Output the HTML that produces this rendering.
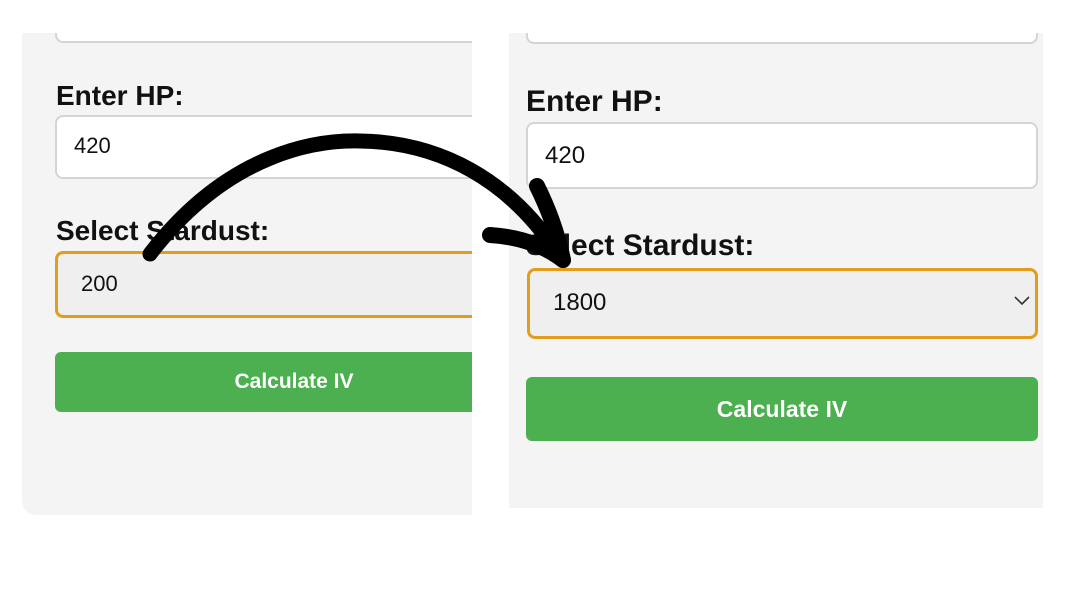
<!DOCTYPE html>
<html><head><style>
body{margin:0;width:1080px;height:594px;background:#fff;position:relative;overflow:hidden;font-family:"Liberation Sans",sans-serif}
.p{position:absolute;background:#f4f4f4;overflow:hidden}
.b{position:absolute;box-sizing:border-box}
.in{background:#fff;border:2px solid #d4d4d4;border-radius:8px}
.sel{background:#efefef;border:3px solid #e29d1d;border-radius:8px}
.btn{background:#4caf50;border-radius:6px;color:#fff;font-weight:bold;text-align:center}
.lab{position:absolute;font-weight:bold;color:#111}
.t{position:absolute;color:#111}
</style></head><body>
<div class="p" style="left:22px;top:33px;width:450px;height:482px;border-bottom-left-radius:14px">
<div class="b in" style="left:33px;top:-20px;width:480px;height:30px"></div>
<div class="lab" style="left:34px;top:47px;font-size:28px">Enter HP:</div>
<div class="b in" style="left:33px;top:82px;width:480px;height:64px"></div>
<div class="t" style="left:52px;top:100px;font-size:22px">420</div>
<div class="lab" style="left:34px;top:182px;font-size:28px">Select Stardust:</div>
<div class="b sel" style="left:33px;top:218px;width:480px;height:67px"></div>
<div class="t" style="left:59px;top:238px;font-size:22px">200</div>
<div class="b btn" style="left:33px;top:319px;width:478px;height:60px;line-height:60px;font-size:21px">Calculate IV</div>
</div>
<div class="p" style="left:509px;top:33px;width:534px;height:475px">
<div class="b in" style="left:17px;top:-20px;width:512px;height:31px"></div>
<div class="lab" style="left:17px;top:52px;font-size:30px">Enter HP:</div>
<div class="b in" style="left:17px;top:89px;width:512px;height:67px"></div>
<div class="t" style="left:36px;top:109px;font-size:24px">420</div>
<div class="lab" style="left:17px;top:196px;font-size:30px">Select Stardust:</div>
<div class="b sel" style="left:18px;top:235px;width:511px;height:71px"></div>
<div class="t" style="left:44px;top:256px;font-size:24px">1800</div>
<svg style="position:absolute;left:505px;top:263px" width="16" height="10"><path d="M1 1 L8 8 L15 1" fill="none" stroke="#333" stroke-width="1.6"/></svg>
<div class="b btn" style="left:17px;top:344px;width:512px;height:64px;line-height:64px;font-size:23px">Calculate IV</div>
</div>
<svg style="position:absolute;left:0;top:0" width="1080" height="594">
<path d="M150 254 C 230 150, 320 140, 360 141 C 440 142, 510 180, 558 254" fill="none" stroke="#000" stroke-width="15" stroke-linecap="round"/>
<path d="M537 186 C 550 212, 558 236, 563 260" fill="none" stroke="#000" stroke-width="16" stroke-linecap="round"/>
<path d="M490 235 C 522 237, 546 247, 563 260" fill="none" stroke="#000" stroke-width="16" stroke-linecap="round"/>
</svg>
</body></html>
